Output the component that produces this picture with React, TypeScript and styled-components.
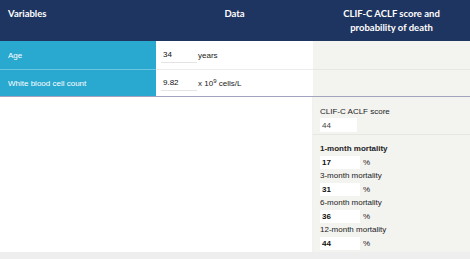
import React from 'react';
import styled, { createGlobalStyle } from 'styled-components';

const GlobalStyle = createGlobalStyle`
  html, body {
    margin: 0;
    padding: 0;
    background: #ffffff;
  }
  body {
    font-family: "Liberation Sans", Arial, sans-serif;
  }
`;

const Page = styled.div`
  width: 470px;
  height: 259px;
  overflow: hidden;
  display: flex;
  flex-direction: column;
  background: #ffffff;
`;

const Grid = styled.div`
  display: grid;
  grid-template-columns: 156px 157px 1fr;
`;

const HeadCell = styled.div<{ $center?: boolean; $top?: boolean }>`
  height: 41px;
  background: #1f3561;
  color: #ffffff;
  font-family: Lato, "Open Sans", sans-serif;
  font-weight: 700;
  font-size: 9.5px;
  line-height: 13.5px;
  display: flex;
  align-items: center;
  justify-content: ${(p) => (p.$center ? 'center' : 'flex-start')};
  text-align: center;
  padding: 0 8px;
  padding-bottom: ${(p) => (p.$top ? '14px' : '0')};
  box-sizing: border-box;
`;

const LabelCell = styled.div<{ $h: number; $last?: boolean }>`
  height: ${(p) => p.$h}px;
  background: #29a9d0;
  color: #ffffff;
  font-size: 8px;
  display: flex;
  align-items: center;
  padding-left: 8px;
  border-bottom: 1px solid ${(p) => (p.$last ? '#a3a3bd' : '#6cc4e0')};
`;

const DataCell = styled.div<{ $h: number; $last?: boolean }>`
  height: ${(p) => p.$h}px;
  background: #ffffff;
  display: flex;
  align-items: center;
  padding-left: 5px;
  font-size: 8px;
  color: #222;
  border-bottom: 1px solid ${(p) => (p.$last ? '#a3a3bd' : '#ececec')};
`;

const EmptyCell = styled.div<{ $h: number; $last?: boolean }>`
  height: ${(p) => p.$h}px;
  background: #f3f3f0;
  border-bottom: 1px solid ${(p) => (p.$last ? '#a3a3bd' : '#e6e6e6')};
`;

const DataInput = styled.div`
  width: 36px;
  height: 15px;
  display: flex;
  align-items: center;
  padding-left: 2px;
  box-sizing: border-box;
  font-size: 8px;
  color: #111;
  border-bottom: 1px solid #e4e4e4;
  margin-right: 1px;
`;

const Unit = styled.span`
  font-size: 8px;
  color: #222;
  sup {
    font-size: 6px;
    vertical-align: 3px;
    line-height: 0;
  }
`;

const Lower = styled.div`
  flex: 1;
  display: grid;
  grid-template-columns: 313px 1fr;
`;

const Blank = styled.div`
  background: #ffffff;
  border-right: 1px solid #f1f1f1;
`;

const Results = styled.div`
  background: #f3f3f0;
  padding: 9px 0 0 7px;
  font-size: 8px;
  color: #222;
`;

const ScoreLabel = styled.div`
  line-height: 11px;
`;

const ScoreBox = styled.div`
  width: 37px;
  height: 14px;
  margin-top: 1px;
  background: #ffffff;
  display: flex;
  align-items: center;
  padding-left: 2px;
  box-sizing: border-box;
  color: #444;
`;

const Divider = styled.div`
  height: 1px;
  background: #e6e6e2;
  margin: 2px 0 7px -7px;
`;

const MortLabel = styled.div<{ $bold?: boolean }>`
  line-height: 13px;
  height: 13px;
  font-weight: ${(p) => (p.$bold ? 700 : 400)};
`;

const MortRow = styled.div`
  height: 14px;
  display: flex;
  align-items: center;
`;

const MortBox = styled.div`
  width: 40px;
  height: 13px;
  background: #ffffff;
  display: flex;
  align-items: center;
  padding-left: 2px;
  box-sizing: border-box;
  font-weight: 700;
  color: #111;
  margin-right: 3px;
`;

const Footer = styled.div`
  height: 7px;
  background: #eeeeee;
`;

const mortality = [
  { label: '1-month mortality', value: '17', bold: true },
  { label: '3-month mortality', value: '31' },
  { label: '6-month mortality', value: '36' },
  { label: '12-month mortality', value: '44' },
];

const App = () => {
  return (
    <Page>
      <GlobalStyle />
      <Grid>
        <HeadCell $top>Variables</HeadCell>
        <HeadCell $center $top>Data</HeadCell>
        <HeadCell $center>
          CLIF-C ACLF score and
          <br />
          probability of death
        </HeadCell>

        <LabelCell $h={28}>Age</LabelCell>
        <DataCell $h={28}>
          <DataInput>34</DataInput>
          <Unit>years</Unit>
        </DataCell>
        <EmptyCell $h={28} />

        <LabelCell $h={26} $last>White blood cell count</LabelCell>
        <DataCell $h={26} $last>
          <DataInput>9.82</DataInput>
          <Unit>
            x 10<sup>9</sup> cells/L
          </Unit>
        </DataCell>
        <EmptyCell $h={26} $last />
      </Grid>
      <Lower>
        <Blank />
        <Results>
          <ScoreLabel>CLIF-C ACLF score</ScoreLabel>
          <ScoreBox>44</ScoreBox>
          <Divider />
          {mortality.map((m) => (
            <React.Fragment key={m.label}>
              <MortLabel $bold={m.bold}>{m.label}</MortLabel>
              <MortRow>
                <MortBox>{m.value}</MortBox>%
              </MortRow>
            </React.Fragment>
          ))}
        </Results>
      </Lower>
      <Footer />
    </Page>
  );
};

export default App;
